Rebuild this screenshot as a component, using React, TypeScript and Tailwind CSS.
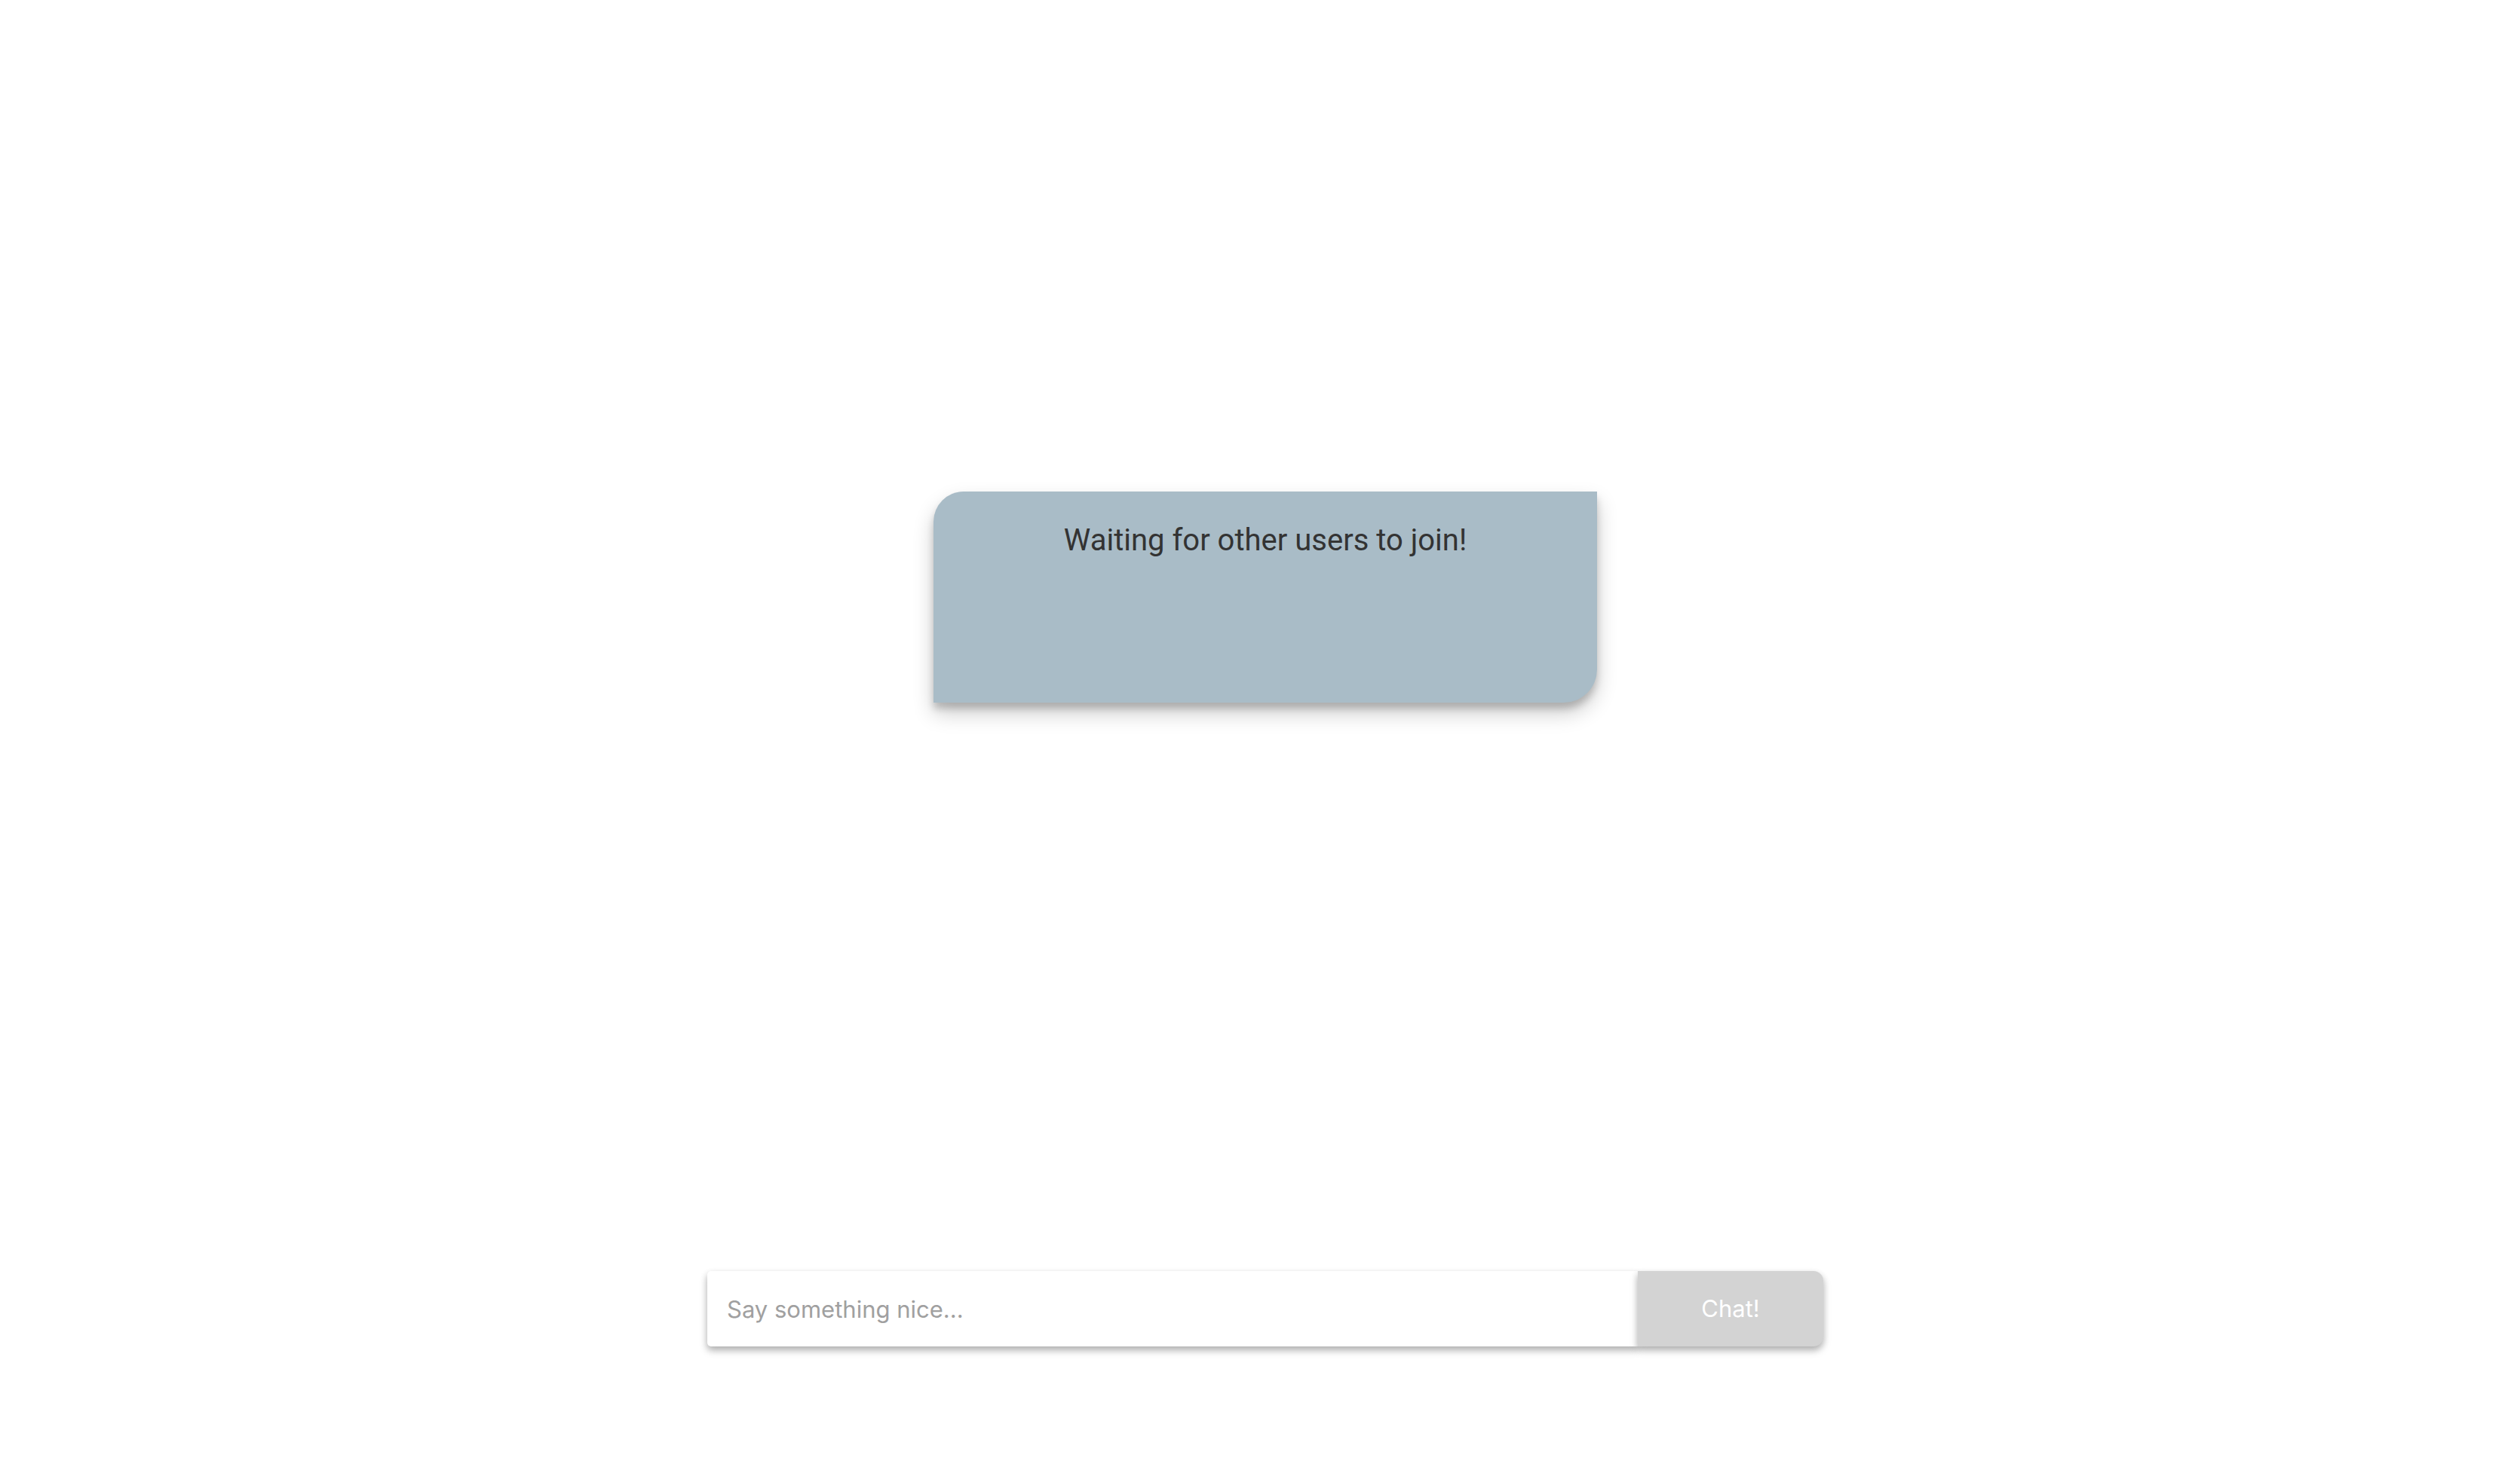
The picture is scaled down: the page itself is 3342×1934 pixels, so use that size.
import { useState } from 'react';

export default function App() {
  const [message, setMessage] = useState('');

  return (
    <div className="h-screen w-full bg-white flex flex-col items-center pl-[14px]">
      {/* waiting card */}
      <div className="mt-[652px] w-[880px] h-[280px] bg-[#a9bcc7] rounded-tl-[40px] rounded-br-[44px] shadow-[0_14px_28px_rgba(0,0,0,0.2),0_8px_10px_rgba(0,0,0,0.18)] pt-[41px]">
        <p className="text-center text-[40px] leading-[47px] text-[#333333] font-['Roboto',sans-serif]">
          Waiting for other users to join!
        </p>
      </div>

      {/* chat input */}
      <form
        className="mt-auto mb-[148px] flex w-[1480px] h-[100px] font-['Inter','Liberation_Sans',sans-serif]"
        onSubmit={(e) => {
          e.preventDefault();
          setMessage('');
        }}
      >
        <input
          value={message}
          onChange={(e) => setMessage(e.target.value)}
          placeholder="Say something nice..."
          className="flex-1 h-full bg-white rounded-l-[5px] pl-[26px] text-[31px] text-[#333] placeholder:text-[#a0a0a0] outline-none shadow-[0_6px_12px_rgba(0,0,0,0.16),0_4px_8px_rgba(0,0,0,0.2)]"
        />
        <button
          type="submit"
          className="w-[246px] h-full bg-[#d3d3d3] text-white text-[31px] rounded-r-[13px] shadow-[0_6px_12px_rgba(0,0,0,0.16),0_4px_8px_rgba(0,0,0,0.2)]"
        >
          Chat!
        </button>
      </form>
    </div>
  );
}
